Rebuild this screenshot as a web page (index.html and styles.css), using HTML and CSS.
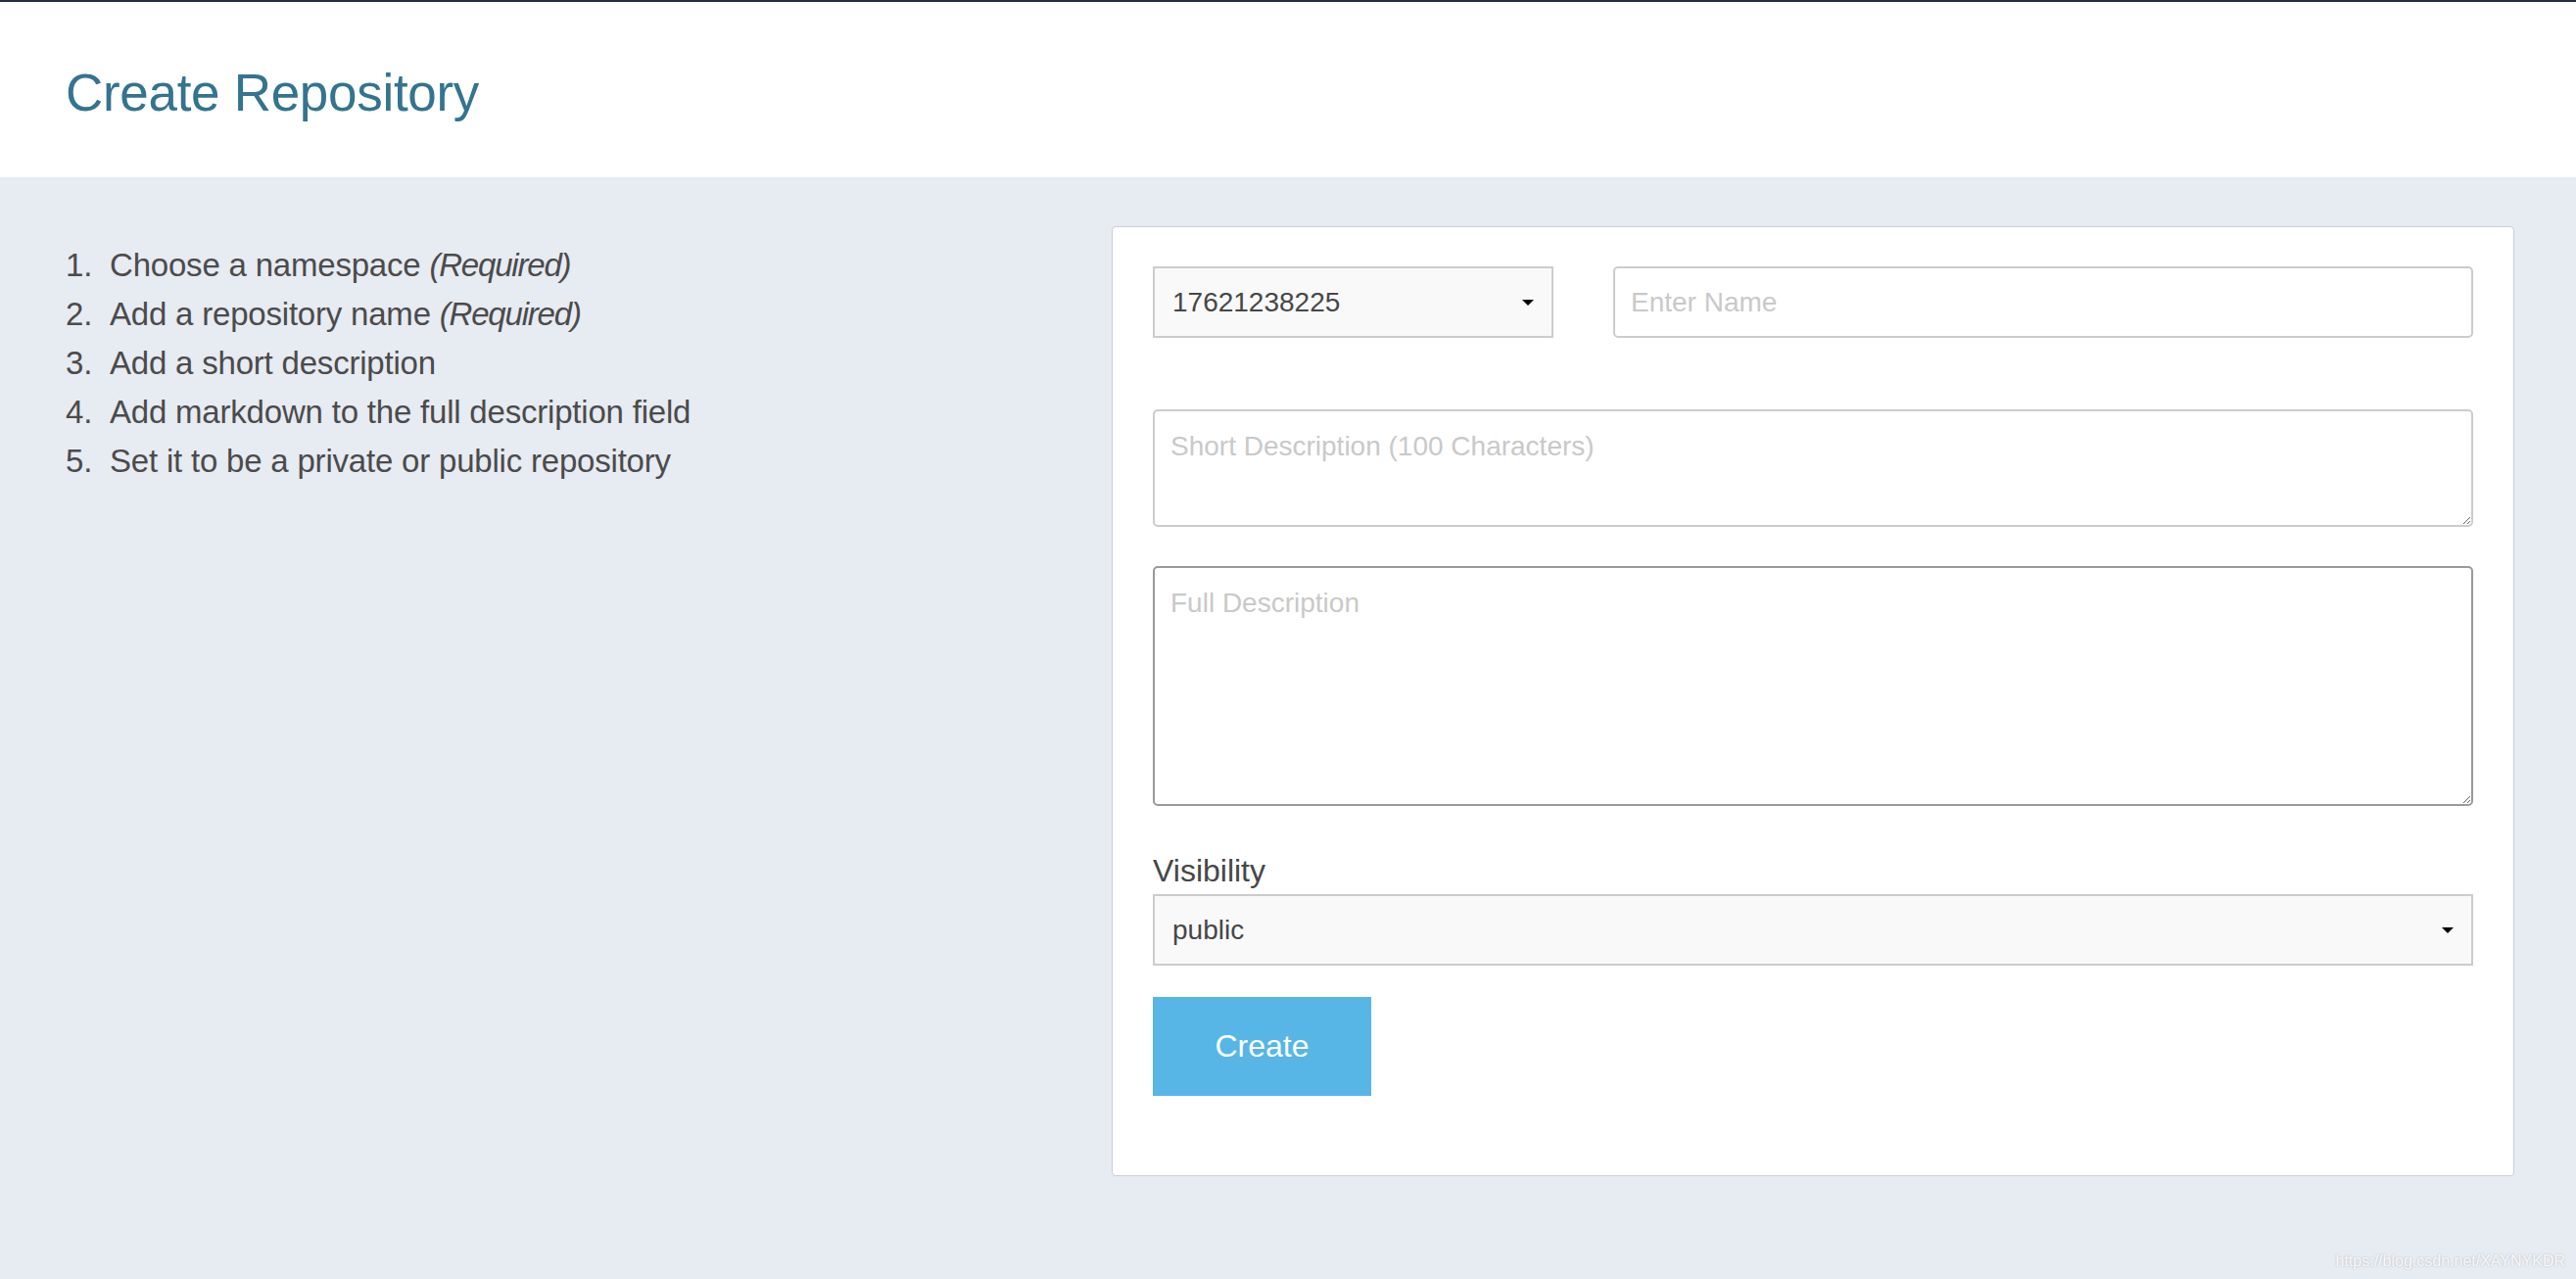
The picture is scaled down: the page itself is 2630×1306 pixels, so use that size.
FILE: index.html
```html
<!DOCTYPE html>
<html lang="en">
<head>
<meta charset="utf-8">
<title>Create Repository</title>
<link rel="stylesheet" href="styles.css">
</head>
<body>
<header class="page-header">
  <h1 class="page-title">Create Repository</h1>
</header>
<main class="page-main">
  <ol class="steps">
    <li>Choose a namespace <em>(Required)</em></li>
    <li>Add a repository name <em>(Required)</em></li>
    <li>Add a short description</li>
    <li>Add markdown to the full description field</li>
    <li>Set it to be a private or public repository</li>
  </ol>
  <form class="card">
    <div class="row-top">
      <div class="select-wrap">
        <select class="select">
          <option>17621238225</option>
        </select>
      </div>
      <input class="input" type="text" placeholder="Enter Name">
    </div>
    <textarea class="textarea textarea-short" placeholder="Short Description (100 Characters)"></textarea>
    <textarea class="textarea textarea-full" placeholder="Full Description"></textarea>
    <label class="field-label">Visibility</label>
    <div class="select-wrap">
      <select class="select">
        <option>public</option>
        <option>private</option>
      </select>
    </div>
    <button type="button" class="btn-create">Create</button>
  </form>
</main>
<div class="watermark">https://blog.csdn.net/XAYNYKDR</div>
</body>
</html>
```

FILE: styles.css
```css
* {
  box-sizing: border-box;
}

html, body {
  margin: 0;
  padding: 0;
}

body {
  font-family: "Liberation Sans", Arial, Helvetica, sans-serif;
  background: #e7ebf2;
  min-height: 100vh;
  position: relative;
  color: #4a4a4a;
}

.page-header {
  background: #ffffff;
  border-top: 2px solid #232f40;
  height: 181px;
  padding: 63px 67px 0;
}

.page-title {
  margin: 0;
  font-size: 53px;
  line-height: 60px;
  font-weight: normal;
  color: #33748f;
  letter-spacing: -0.3px;
}

.page-main {
  display: grid;
  grid-template-columns: 1fr 1432px;
  padding: 50px 63px 0 67px;
  align-items: start;
}

.steps {
  list-style: none;
  margin: 15px 0 0;
  padding: 0;
  counter-reset: step;
  font-size: 33px;
  line-height: 50px;
  color: #4b4b4b;
  letter-spacing: -0.2px;
}

.steps li {
  counter-increment: step;
}

.steps li::before {
  content: counter(step) ".";
  display: inline-block;
  width: 45px;
}

.steps em {
  font-style: italic;
  letter-spacing: -1.2px;
}

.card {
  background: #ffffff;
  border: 1px solid #c6cfdb;
  border-radius: 4px;
  padding: 40px 41px 81px 41px;
  display: flex;
  flex-direction: column;
  align-items: stretch;
}

.row-top {
  display: grid;
  grid-template-columns: 409px 1fr;
  gap: 61px;
  margin-bottom: 73px;
}

.select-wrap {
  position: relative;
}

.select-wrap::after {
  content: "";
  position: absolute;
  right: 20px;
  top: 50%;
  margin-top: -3px;
  border-left: 6px solid transparent;
  border-right: 6px solid transparent;
  border-top: 6px solid #000000;
  pointer-events: none;
}

.select {
  -webkit-appearance: none;
  appearance: none;
  display: block;
  width: 100%;
  height: 73px;
  margin: 0;
  padding: 0 40px 0 18px;
  background: #f9f9f9;
  border: 2px solid #cccccc;
  border-radius: 0;
  font-family: inherit;
  font-size: 28px;
  color: #474747;
  outline: none;
}

.input {
  display: block;
  width: 100%;
  height: 73px;
  margin: 0;
  padding: 0 16px;
  border: 2px solid #cccccc;
  border-radius: 5px;
  font-family: inherit;
  font-size: 28px;
  color: #474747;
  background: #ffffff;
  outline: none;
}

.textarea {
  display: block;
  width: 100%;
  margin: 0;
  padding: 16px 16px;
  border: 2px solid #cccccc;
  border-radius: 5px;
  font-family: inherit;
  font-size: 28px;
  line-height: 40px;
  color: #474747;
  background: #ffffff;
  outline: none;
  resize: vertical;
}

.textarea-short {
  height: 120px;
  margin-bottom: 40px;
}

.textarea-full {
  height: 245px;
  border-color: #9a9a9a;
  margin-bottom: 46px;
}

.input::placeholder,
.textarea::placeholder {
  color: #c9c9c9;
  opacity: 1;
}

.field-label {
  display: block;
  font-size: 32px;
  line-height: 40px;
  color: #474747;
  margin-bottom: 4px;
}

.field-label + .select-wrap {
  margin-bottom: 32px;
}

.btn-create {
  align-self: flex-start;
  width: 223px;
  height: 101px;
  margin: 0;
  padding: 0;
  border: none;
  border-radius: 0;
  background: #57b6e6;
  color: #ffffff;
  font-family: inherit;
  font-size: 32px;
  cursor: pointer;
}

.watermark {
  position: absolute;
  right: 11px;
  bottom: 9px;
  font-size: 16px;
  color: rgba(255, 255, 255, 0.9);
  text-shadow: 0 0 2px rgba(110, 110, 110, 0.45);
}
```
